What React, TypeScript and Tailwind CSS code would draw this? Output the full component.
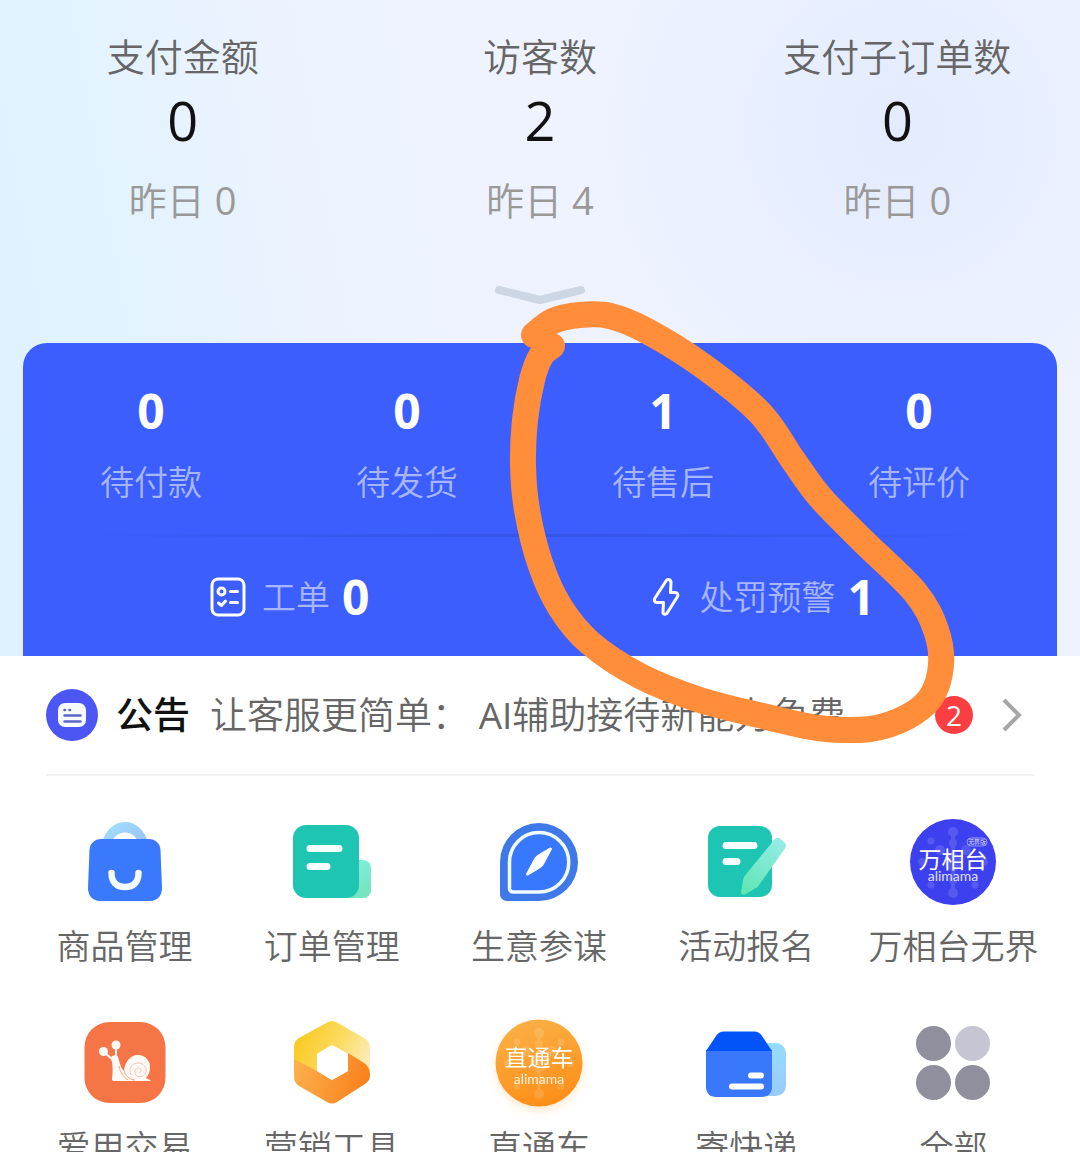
import React from 'react';

const stats = [
  { label: '支付金额', value: 0, yesterday: 0 },
  { label: '访客数', value: 2, yesterday: 4 },
  { label: '支付子订单数', value: 0, yesterday: 0 },
];

const orders = [
  { label: '待付款', value: 0 },
  { label: '待发货', value: 0 },
  { label: '待售后', value: 1 },
  { label: '待评价', value: 0 },
];

const tools = [
  { label: '商品管理', icon: GoodsIcon },
  { label: '订单管理', icon: OrderIcon },
  { label: '生意参谋', icon: CompassIcon },
  { label: '活动报名', icon: SignUpIcon },
  { label: '万相台无界', icon: WanxiangIcon },
  { label: '爱用交易', icon: SnailIcon },
  { label: '营销工具', icon: MarketingIcon },
  { label: '直通车', icon: ZhitongcheIcon },
  { label: '寄快递', icon: ExpressIcon },
  { label: '全部', icon: AllIcon },
];

// points the marker passes through, in drawing order
const markerPoints = [
  [534, 335], [553, 321], [580, 315], [610, 316], [647, 331], [703, 366], [760, 413],
  [793, 460], [820, 497], [863, 541], [915, 592], [936, 630], [941, 665], [931, 697],
  [907, 717], [870, 729], [818, 728], [767, 717], [700, 700], [640, 676], [590, 643],
  [560, 607], [540, 563], [527, 510], [523, 465], [525, 420], [532, 380], [541, 356], [552, 346],
];

function smoothPath(points: number[][]) {
  let d = `M${points[0][0]} ${points[0][1]}`;
  for (let i = 0; i < points.length - 1; i++) {
    const p0 = points[i - 1] ?? points[i];
    const p1 = points[i];
    const p2 = points[i + 1];
    const p3 = points[i + 2] ?? p2;
    d += `C${p1[0] + (p2[0] - p0[0]) / 6} ${p1[1] + (p2[1] - p0[1]) / 6} ${p2[0] - (p3[0] - p1[0]) / 6} ${p2[1] - (p3[1] - p1[1]) / 6} ${p2[0]} ${p2[1]}`;
  }
  return d;
}

function GoodsIcon() {
  return (
    <svg viewBox="0 0 88 88" className="size-[88px]" aria-hidden="true">
      <defs>
        <linearGradient id="handle" x1="0" y1="0" x2="1" y2="0.6">
          <stop offset="0" stopColor="#9fe3fa" />
          <stop offset="1" stopColor="#9cc6fb" />
        </linearGradient>
      </defs>
      <path d="M21 24C25 11 34 4 44 4s19 7 23 20z" fill="url(#handle)" />
      <path d="M31 24c2-6 7-9.500 13-9.500S55 18 57 24z" fill="#fff" />
      <path d="M20 21h48c6 0 11 4 11.500 11L81 70c0 8-5 13-12 13H19c-7 0-12-5-12-13l1.500-38C9 25 14 21 20 21z" fill="#3a78fc" />
      <path d="M30.500 55c0 9 5 14 13.500 14s13.500-5 13.500-14" fill="none" stroke="#f4fbff" strokeWidth="6.500" strokeLinecap="round" />
    </svg>
  );
}

function OrderIcon() {
  return (
    <svg viewBox="0 0 88 88" className="size-[88px]" aria-hidden="true">
      <defs>
        <linearGradient id="tab" x1="0" y1="0" x2="0.300" y2="1">
          <stop offset="0" stopColor="#86efe2" />
          <stop offset="1" stopColor="#74e5bf" />
        </linearGradient>
      </defs>
      <rect x="50" y="42" width="33" height="38" rx="8" fill="url(#tab)" />
      <rect x="5" y="7" width="66" height="73" rx="13" fill="#1ec5b3" />
      <path d="M22 30.500h29M22 48.500h17" stroke="#f4fffe" strokeWidth="7" strokeLinecap="round" />
    </svg>
  );
}

function CompassIcon() {
  return (
    <svg viewBox="0 0 88 88" className="size-[88px]" aria-hidden="true">
      <path d="M44 5a39 39 0 0 1 0 78H12c-4 0-7-3-7-7V44A39 39 0 0 1 44 5z" fill="#3f78e8" />
      <path d="M44 14.500a29.500 29.500 0 0 1 0 59.500H18c-2 0-3.500-1.500-3.500-3.500V44A29.500 29.500 0 0 1 44 14.500z" fill="#3878ff" stroke="#effbff" strokeWidth="3.500" />
      <path d="M56 31.500l-7.500 14c-1 2-1.500 2.500-3 3.500L33 56.500c-1 .5-1.500 0-1-1l7.500-14c1-2 1.500-2.500 3-3.500L55 30.500c1-.5 1.500 0 1 1z" fill="#fff" stroke="#fff" strokeWidth="1.500" strokeLinejoin="round" />
    </svg>
  );
}

function SignUpIcon() {
  return (
    <svg viewBox="0 0 88 88" className="size-[88px]" aria-hidden="true">
      <defs>
        <linearGradient id="pen" x1="0.800" y1="0" x2="0.200" y2="1">
          <stop offset="0" stopColor="#96ebe6" />
          <stop offset="1" stopColor="#60e6b4" />
        </linearGradient>
      </defs>
      <rect x="6" y="8" width="64" height="71" rx="12" fill="#1ec5b3" />
      <path d="M24 27.500h28M24 43.500h11" stroke="#f4fffe" strokeWidth="7" strokeLinecap="round" />
      <path d="M72 22c2-2.500 4-3 6.500-1l4 3.500c2 2 2 3.500.5 6L57 67c-1 1.500-2 2.500-4 3.500l-10 6c-2 1-4-.5-4-2.500l2-12c.3-2 1-3 2-4.500z" fill="url(#pen)" />
    </svg>
  );
}

// faint dot pattern shared by the two round alimama logos
function LogoDots() {
  return (
    <g fill="#fff" opacity="0.13">
      <circle cx="44" cy="14" r="5" />
      <circle cx="44" cy="25" r="4" />
      <circle cx="22" cy="23" r="3.500" />
      <circle cx="66" cy="23" r="3.500" />
      <circle cx="31" cy="32" r="5" />
      <circle cx="57" cy="32" r="5" />
      <circle cx="13" cy="44" r="4" />
      <circle cx="75" cy="44" r="4" />
      <circle cx="44" cy="44" r="9" />
      <circle cx="22" cy="67" r="3.500" />
      <circle cx="66" cy="67" r="3.500" />
      <circle cx="44" cy="62" r="4" />
      <circle cx="44" cy="75" r="5" />
      <path d="M42 14h4v60h-4z" />
    </g>
  );
}

function WanxiangIcon() {
  return (
    <svg viewBox="0 0 88 88" className="size-[88px]" aria-hidden="true">
      <circle cx="44" cy="44" r="43" fill="#3d40ee" />
      <LogoDots />
      <rect x="58" y="20" width="20" height="8" rx="4" fill="none" stroke="#a9aefb" strokeWidth="0.800" />
      <text x="68" y="26" textAnchor="middle" fontSize="6" fill="#d5d8ff">无界版</text>
      <text x="44" y="50" textAnchor="middle" fontSize="23" fill="#fff">万相台</text>
      <text x="44" y="63" textAnchor="middle" fontSize="14" fill="#e0e3ff" className="font-[Lato]">alimama</text>
    </svg>
  );
}

function SnailIcon() {
  return (
    <svg viewBox="0 0 88 88" className="size-[88px]" aria-hidden="true">
      <rect x="3.500" y="3" width="81" height="81" rx="25" fill="#f67546" />
      <g fill="#fffaf6">
        <circle cx="22.500" cy="32.500" r="4.500" />
        <circle cx="35" cy="26" r="4.500" />
        <path d="M30 39c0-3 6-4 7-1l2 7c1 3 2 5 4 7 1-10 7-16 14-16 8 0 13 7 12 14-.5 4-2 7-4 9l4 2c1 .5.500 1 0 1H33c-1.500 0-2-1-2-2 1-8 1-15-1-21z" />
      </g>
      <path d="M23 33l9 8M35 27v11" stroke="#fffaf6" strokeWidth="2" />
      <path d="M38 47c1 6 4 11 9 14M43 51c1 5 5 10 11 10" fill="none" stroke="#f5a98b" strokeWidth="1" />
      <path d="M50 56c-3-6 1-12 7-12s9 5 8 9-6 6-9 4-3-8 1-8 4 4 1 5" fill="none" stroke="#f8c4ae" strokeWidth="1" />
    </svg>
  );
}

function MarketingIcon() {
  return (
    <svg viewBox="0 0 88 88" className="size-[88px]" aria-hidden="true">
      <defs>
        <linearGradient id="gold" x1="0" y1="0.300" x2="1" y2="0.600">
          <stop offset="0" stopColor="#f9c91d" />
          <stop offset="0.600" stopColor="#fbdb63" />
          <stop offset="1" stopColor="#fdebb4" />
        </linearGradient>
        <linearGradient id="amber" x1="0" y1="0.300" x2="1" y2="0.500">
          <stop offset="0" stopColor="#fcb04d" />
          <stop offset="1" stopColor="#f9801c" />
        </linearGradient>
      </defs>
      <path d="M39 3.500q5-3 10 0l28 16q5 3 5 9v26L60 35 44 26 29 35v17L6 41V28q0-6 5-9z" fill="url(#gold)" />
      <path d="M6 40l23 12 15 9 16-9V34l13 8q9 5 9 13v1q0 6-5 9L49 83q-5 3-10 0L11 67q-5-3-5-9z" fill="url(#amber)" />
      <path d="M44 26l16 9v17l-16 9-15-9V35z" fill="#fff" />
    </svg>
  );
}

function ZhitongcheIcon() {
  return (
    <svg viewBox="0 0 88 88" className="size-[88px] overflow-visible drop-shadow-[0_4px_5px_rgba(250,170,60,0.25)]" aria-hidden="true">
      <defs>
        <linearGradient id="orange" x1="0.300" y1="0" x2="0.600" y2="1">
          <stop offset="0" stopColor="#fbb046" />
          <stop offset="1" stopColor="#fd8e17" />
        </linearGradient>
      </defs>
      <circle cx="44" cy="44" r="43.500" fill="url(#orange)" />
      <LogoDots />
      <text x="44" y="47" textAnchor="middle" fontSize="23" fill="#fff">直通车</text>
      <text x="44" y="65" textAnchor="middle" fontSize="14" fill="#fff3dc" className="font-[Lato]">alimama</text>
    </svg>
  );
}

function ExpressIcon() {
  return (
    <svg viewBox="0 0 88 88" className="size-[88px]" aria-hidden="true">
      <defs>
        <linearGradient id="side" x1="0" y1="0" x2="0.300" y2="1">
          <stop offset="0" stopColor="#94e1fb" />
          <stop offset="1" stopColor="#9accfb" />
        </linearGradient>
      </defs>
      <rect x="52" y="24" width="32" height="53" rx="10" fill="url(#side)" />
      <path d="M4 31h66v37c0 6-4 10-10 10H14c-6 0-10-4-10-10z" fill="#3978fb" />
      <path d="M4 32l10-15c2-3 4-4.500 8-4.500h30c4 0 6 1.500 8 4.500l10 15z" fill="#0254fa" />
      <path d="M49 56.500h10M30 67.500h29" stroke="#fff" strokeWidth="6" strokeLinecap="round" />
    </svg>
  );
}

function AllIcon() {
  return (
    <svg viewBox="0 0 88 88" className="size-[88px]" aria-hidden="true">
      <circle cx="24.500" cy="24.500" r="17.500" fill="#8f8f9e" />
      <circle cx="63.500" cy="24.500" r="17.500" fill="#c6c5d3" />
      <circle cx="24.500" cy="63.500" r="17.500" fill="#8f8f9e" />
      <circle cx="63.500" cy="63.500" r="17.500" fill="#8f8f9e" />
    </svg>
  );
}

function TicketIcon() {
  return (
    <svg viewBox="0 0 36 40" className="h-10 w-9" fill="none" stroke="#fff" strokeWidth="3" strokeLinecap="round" strokeLinejoin="round" aria-hidden="true">
      <rect x="2" y="2" width="32" height="36" rx="6" />
      <circle cx="11.500" cy="14.500" r="3.500" />
      <path d="M20.500 14.500h7M20.500 25.500h7M8.500 26l3 2.500 4-4.500" />
    </svg>
  );
}

function BoltIcon() {
  return (
    <svg viewBox="0 0 28 40" className="h-10 w-7" fill="none" stroke="#fff" strokeWidth="3" strokeLinejoin="round" aria-hidden="true">
      <path d="M14 4c1.500-2.500 5-1.500 5 1.500l-.5 10H23c2.500 0 3.500 2 2.500 4L15.500 35.500c-1.500 3-5 2-4.500-1l.5-9H5c-2.500 0-3.500-2-2-4.500z" />
    </svg>
  );
}

// hand-drawn marker stroke that floats above the page
function MarkerStroke() {
  return (
    <svg viewBox="0 0 1080 1152" className="pointer-events-none absolute top-0 left-0 w-full" aria-hidden="true">
      <path d={smoothPath(markerPoints)} fill="none" stroke="#ff8d3a" strokeWidth="26" strokeLinecap="round" strokeLinejoin="round" />
    </svg>
  );
}

export default function App() {
  return (
    <main className="relative h-screen overflow-hidden bg-white font-['Open_Sans','Noto_Sans_CJK_SC',sans-serif] text-[#666]">
      <header className="bg-[radial-gradient(circle_at_900px_130px,#e3ebfd_0px,#e8effe_140px,transparent_320px),linear-gradient(80deg,#def2ff_0%,#e2f3ff_15%,#ecf3ff_32%,#eff3ff_50%,#eef3fe_100%)] pt-9">
        <section className="grid grid-cols-3 px-1 text-center">
          {stats.map(stat => (
            <div key={stat.label} className="flex flex-col">
              <p className="text-[38px] leading-10 font-[350]">{stat.label}</p>
              <p className="mt-4 text-[54px] leading-[56px] font-medium text-[#111]">{stat.value}</p>
              <p className="mt-8 text-[38px] leading-10 font-[350] text-[#999]">
                昨日 <span className="font-normal">{stat.yesterday}</span>
              </p>
            </div>
          ))}
        </section>

        <button type="button" aria-label="展开" className="mx-auto mt-16 block">
          <svg viewBox="0 0 92 22" className="h-[22px] w-[92px]" aria-hidden="true">
            <path d="M5 6l41 10 41-10" fill="none" stroke="#cdd6e5" strokeWidth="8" strokeLinecap="round" strokeLinejoin="round" />
          </svg>
        </button>

        <section className="mx-[23px] mt-[37px] rounded-t-3xl bg-[#3c5eff] pt-11 text-[#a7b7ff]">
          <div className="grid grid-cols-4 pr-[10px] text-center">
            {orders.map(order => (
              <div key={order.label}>
                <p className="text-5xl leading-[48px] font-bold text-white">{order.value}</p>
                <p className="mt-[27px] text-[34px] leading-10 font-[350]">{order.label}</p>
              </div>
            ))}
          </div>
          <div className="mx-10 mt-8 h-[3px] bg-linear-to-r from-transparent via-[#3454e6] to-transparent" />
          <div className="flex justify-between pt-9 pr-[182px] pb-[35px] pl-[187px] text-[34px] leading-[48px] font-[350]">
            <div className="flex items-center">
              <TicketIcon />
              <span className="ml-4">工单</span>
              <span className="ml-3 text-5xl leading-[48px] font-bold text-white">0</span>
            </div>
            <div className="flex items-center">
              <BoltIcon />
              <span className="ml-5">处罚预警</span>
              <span className="ml-3 text-5xl leading-[48px] font-bold text-white">1</span>
            </div>
          </div>
        </section>
      </header>

      <a href="#notice" className="mx-[46px] flex h-[120px] items-center border-b-2 border-[#f2f2f2] text-[37px] leading-10">
        <svg viewBox="0 0 52 52" className="size-[52px] shrink-0" aria-hidden="true">
          <circle cx="26" cy="26" r="26" fill="#4c57f3" />
          <rect x="12" y="14" width="28" height="24" rx="7" fill="#f7fbff" />
          <path d="M18.500 21h.5M23.500 21h.5M18.500 26.500h16M18.500 32.500h16" stroke="#5b66c9" strokeWidth="2.500" strokeLinecap="round" />
        </svg>
        <strong className="ml-[18px] shrink-0 font-medium text-[#111]">公告</strong>
        <span className="ml-5 grow truncate font-[350]">
          让客服更简单： <span className="font-normal">AI</span>辅助接待新能力免费
        </span>
        <span className="flex size-[38px] shrink-0 items-center justify-center rounded-full bg-[#fa3e41] text-[28px] leading-8 text-white">2</span>
        <svg viewBox="0 0 22 38" className="mr-[11px] ml-7 h-[38px] w-[22px] shrink-0" aria-hidden="true">
          <path d="M3 4l15 15L3 34" fill="none" stroke="#a6a6a6" strokeWidth="4" />
        </svg>
      </a>

      <nav className="mr-[23px] ml-[21px] grid grid-cols-5 gap-y-[53px] pt-[42px]">
        {tools.map(tool => {
          const Icon = tool.icon;
          return (
            <a key={tool.label} href="#tool" className="flex flex-col items-center gap-5">
              <Icon />
              <span className="text-[34px] leading-10 font-[350] whitespace-nowrap">{tool.label}</span>
            </a>
          );
        })}
      </nav>

      <MarkerStroke />
    </main>
  );
}
